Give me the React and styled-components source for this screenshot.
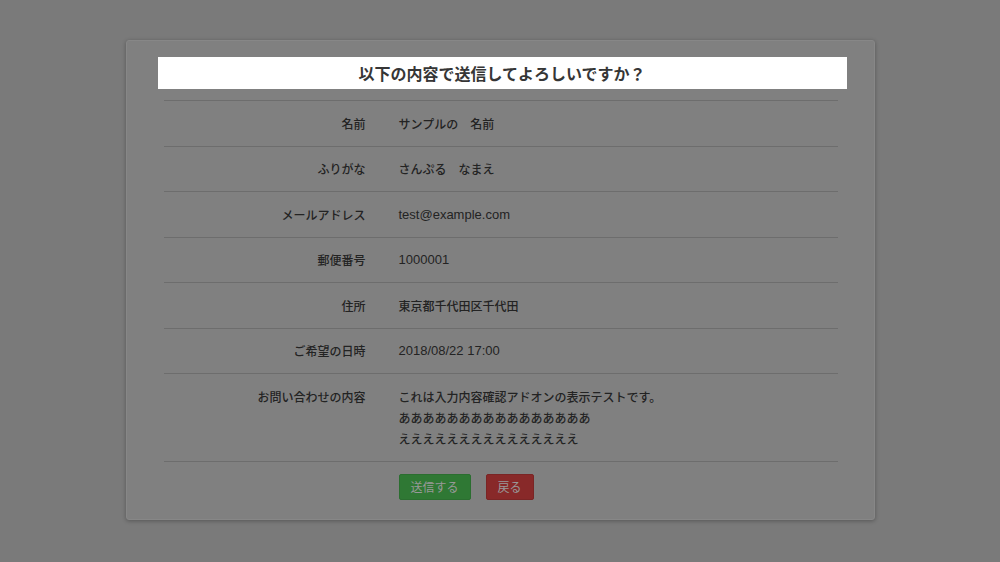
import styled, { createGlobalStyle } from 'styled-components';

const GlobalStyle = createGlobalStyle`
    html, body {
        margin: 0;
        padding: 0;
        background: #7a7a7a;
        font-family: "Liberation Sans", "Noto Sans CJK JP", sans-serif;
    }
`;

const Page = styled.div`
    padding: 40px 0 42px;
    display: flex;
    justify-content: center;
`;

const Card = styled.div`
    width: 749px;
    background: #808080;
    border: 1px solid #878787;
    border-radius: 3px;
    box-shadow: 0 1px 4px rgba(0, 0, 0, 0.3);
    padding: 16px 27px 19px 31px;
    box-sizing: border-box;
`;

const Title = styled.h2`
    margin: 0 0 11px;
    height: 32px;
    background: #ffffff;
    color: #363636;
    font-family: "Noto Sans CJK JP", sans-serif;
    font-size: 16px;
    font-weight: 700;
    line-height: 32px;
    text-align: center;
`;

const Table = styled.div`
    margin: 0 9px 0 6px;
    border-top: 1px solid #6d6d6d;
`;

const Row = styled.div`
    display: grid;
    grid-template-columns: 219px 1fr;
    border-bottom: 1px solid #6d6d6d;
    font-size: 12px;
    line-height: 21px;
    color: #232323;
`;

const Label = styled.div`
    padding: 11.75px 17px 11.75px 0;
    text-align: right;
    font-family: "Noto Sans CJK JP", sans-serif;
    font-weight: 500;
`;

const Value = styled.div`
    padding: 11.75px 0 11.75px 16px;
    font-family: ${({ $latin }) =>
        $latin ? '"Liberation Sans", sans-serif' : '"Noto Sans CJK JP", sans-serif'};
    font-size: ${({ $latin }) => ($latin ? '13px' : '12px')};
    font-weight: 500;
`;

const Actions = styled.div`
    display: flex;
    gap: 15px;
    padding: 12px 0 0 241px;
`;

const Button = styled.button`
    height: 26px;
    padding: 0 11px;
    border: 1px solid ${({ $variant }) => ($variant === 'ok' ? '#2b6e30' : '#7a2525')};
    border-radius: 2px;
    background: ${({ $variant }) => ($variant === 'ok' ? '#2f7834' : '#882929')};
    color: #999999;
    font-family: "Noto Sans CJK JP", sans-serif;
    font-size: 12px;
    cursor: pointer;
`;

const rows = [
    { label: '名前', value: ['サンプルの　名前'] },
    { label: 'ふりがな', value: ['さんぷる　なまえ'] },
    { label: 'メールアドレス', value: ['test@example.com'], latin: true },
    { label: '郵便番号', value: ['1000001'], latin: true },
    { label: '住所', value: ['東京都千代田区千代田'] },
    { label: 'ご希望の日時', value: ['2018/08/22 17:00'], latin: true },
    {
        label: 'お問い合わせの内容',
        value: [
            'これは入力内容確認アドオンの表示テストです。',
            'ああああああああああああああああ',
            'えええええええええええええええ',
        ],
    },
];

function App() {
    return (
        <>
            <GlobalStyle />
            <Page>
                <Card>
                    <Title>以下の内容で送信してよろしいですか？</Title>
                    <Table>
                        {rows.map((row) => (
                            <Row key={row.label}>
                                <Label>{row.label}</Label>
                                <Value $latin={row.latin}>
                                    {row.value.map((line) => (
                                        <div key={line}>{line}</div>
                                    ))}
                                </Value>
                            </Row>
                        ))}
                    </Table>
                    <Actions>
                        <Button $variant="ok">送信する</Button>
                        <Button $variant="back">戻る</Button>
                    </Actions>
                </Card>
            </Page>
        </>
    );
}

export default App;
